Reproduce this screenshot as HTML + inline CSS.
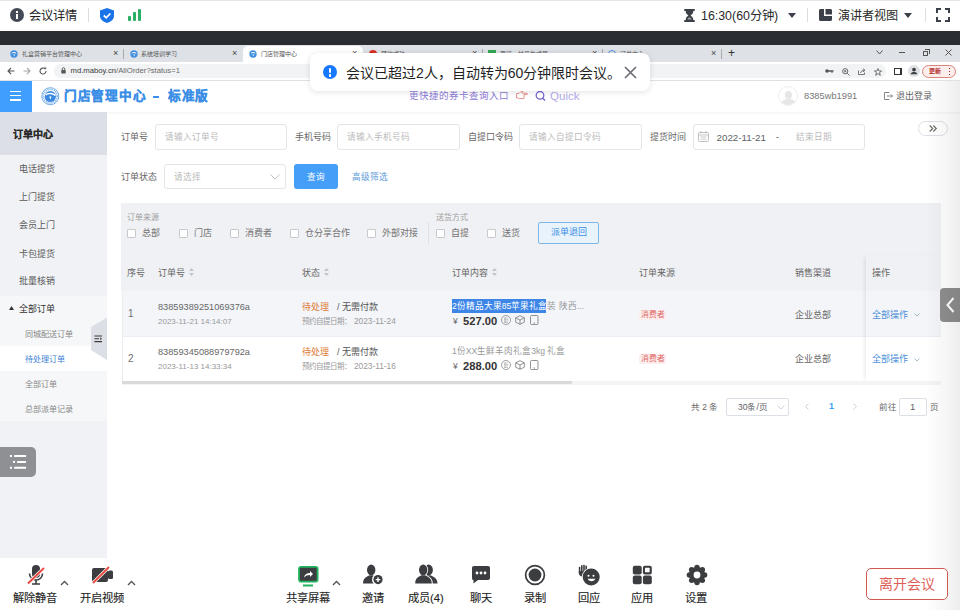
<!DOCTYPE html>
<html lang="zh-CN"><head><meta charset="utf-8">
<style>
*{box-sizing:border-box;margin:0;padding:0}
html,body{width:960px;height:610px;overflow:hidden;background:#fff;font-family:"Liberation Sans",sans-serif;color:#333}
.a{position:absolute;white-space:nowrap}
svg{position:absolute;overflow:visible}
</style></head><body>
<!-- ============ TOP MEETING BAR ============ -->
<div class="a" style="left:0;top:0;width:960px;height:31px;background:#fff;border-top:1px solid #e6e6e6"></div>
<div class="a" style="left:10px;top:8px;width:14px;height:14px;border-radius:50%;background:#444a55"></div>
<div class="a" style="left:16px;top:11px;width:2px;height:2px;background:#fff"></div>
<div class="a" style="left:16px;top:14px;width:2px;height:5px;background:#fff"></div>
<div class="a" style="left:29px;top:7px;font-size:12.3px;line-height:18px;color:#1f1f1f">会议详情</div>
<div class="a" style="left:88px;top:8px;width:1px;height:14px;background:#ddd"></div>
<svg style="left:100px;top:8px" width="14" height="15" viewBox="0 0 14 15"><path d="M7 0 L14 2.5 L14 8 C14 11.5 10.5 14 7 15 C3.5 14 0 11.5 0 8 L0 2.5 Z" fill="#1a73e8"/><path d="M3.8 7.5 L6.2 9.8 L10.3 5.5" stroke="#fff" stroke-width="1.8" fill="none"/></svg>
<div class="a" style="left:128px;top:16px;width:3px;height:5px;background:#2bae66;border-radius:1px"></div>
<div class="a" style="left:133px;top:12px;width:3px;height:9px;background:#2bae66;border-radius:1px"></div>
<div class="a" style="left:138px;top:9px;width:3px;height:12px;background:#2bae66;border-radius:1px"></div>

<svg style="left:683.5px;top:8.6px" width="11" height="13" viewBox="0 0 11 13"><path d="M1 0H10A1 1 0 0 1 10 2H9.2V3C9.2 4.8 7 5.8 6.6 6.5C7 7.2 9.2 8.2 9.2 10V11H10A1 1 0 0 1 10 13H1A1 1 0 0 1 1 11H1.8V10C1.8 8.2 4 7.2 4.4 6.5C4 5.8 1.8 4.8 1.8 3V2H1A1 1 0 0 1 1 0Z" fill="#3c4048"/><path d="M3.5 10.5C3.5 9.3 5 8.5 5.5 8.3C6 8.5 7.5 9.3 7.5 10.5Z" fill="#fff" opacity="0.5"/></svg>
<div class="a" style="left:701px;top:6.6px;font-size:12.4px;line-height:18px;color:#2a2a2a">16:30(60分钟)</div>
<svg style="left:788px;top:13px" width="8" height="5" viewBox="0 0 8 5"><path d="M0 0H8L4 5Z" fill="#3c4048"/></svg>
<div class="a" style="left:807px;top:8px;width:1px;height:14px;background:#ddd"></div>
<svg style="left:819px;top:9px" width="13" height="12" viewBox="0 0 13 12"><path d="M1.5 0H5V7H13V10.5C13 11.3 12.3 12 11.5 12H1.5C0.7 12 0 11.3 0 10.5V1.5C0 0.7 0.7 0 1.5 0ZM6.5 0H11.5C12.3 0 13 0.7 13 1.5V5.5H6.5Z" fill="#3c4048"/></svg>
<div class="a" style="left:838px;top:6.6px;font-size:12.1px;line-height:18px;color:#2a2a2a">演讲者视图</div>
<svg style="left:904px;top:13px" width="8" height="5" viewBox="0 0 8 5"><path d="M0 0H8L4 5Z" fill="#3c4048"/></svg>
<div class="a" style="left:925px;top:8px;width:1px;height:14px;background:#ddd"></div>
<svg style="left:936px;top:8px" width="14" height="14" viewBox="0 0 14 14"><path d="M1 5V1H5M9 1H13V5M13 9V13H9M5 13H1V9" stroke="#3c4048" stroke-width="2" fill="none"/></svg>

<!-- dark band -->
<div class="a" style="left:0;top:31px;width:960px;height:14px;background:#2a2d31"></div>

<!-- ============ BROWSER CHROME ============ -->
<div class="a" style="left:0;top:45px;width:960px;height:17px;background:#dee1e6"></div>
<!-- tabs -->
<svg style="left:10px;top:49.5px" width="8" height="8" viewBox="0 0 8 8"><circle cx="4" cy="4" r="3.7" fill="#3f8fe0"/><path d="M1.8 3.6C2.6 2.2 5 2 6.2 3.4" stroke="#fff" stroke-width="1" fill="none"/><path d="M3.2 4.6H5.2L4.2 6.2Z" fill="#fff"/></svg>
<div class="a" style="left:22px;top:48.5px;font-size:6px;line-height:11px;color:#555">礼盒营销平台管理中心</div>
<div class="a" style="left:113px;top:47px;font-size:9px;line-height:12px;color:#444">×</div>
<div class="a" style="left:123px;top:49px;width:1px;height:10px;background:#aaa"></div>
<svg style="left:130px;top:49.5px" width="8" height="8" viewBox="0 0 8 8"><circle cx="4" cy="4" r="3.7" fill="#3f8fe0"/><path d="M1.8 3.6C2.6 2.2 5 2 6.2 3.4" stroke="#fff" stroke-width="1" fill="none"/><path d="M3.2 4.6H5.2L4.2 6.2Z" fill="#fff"/></svg>
<div class="a" style="left:141px;top:48.5px;font-size:6px;line-height:11px;color:#555">系统培训学习</div>
<div class="a" style="left:232px;top:47px;font-size:9px;line-height:12px;color:#444">×</div>
<div class="a" style="left:243px;top:46px;width:120px;height:16px;background:#fff;border-radius:5px 5px 0 0"></div>
<svg style="left:249px;top:49.5px" width="8" height="8" viewBox="0 0 8 8"><circle cx="4" cy="4" r="3.7" fill="#3f8fe0"/><path d="M1.8 3.6C2.6 2.2 5 2 6.2 3.4" stroke="#fff" stroke-width="1" fill="none"/><path d="M3.2 4.6H5.2L4.2 6.2Z" fill="#fff"/></svg>
<div class="a" style="left:261px;top:48.5px;font-size:6px;line-height:11px;color:#555">门店管理中心</div>
<div class="a" style="left:352px;top:47px;font-size:9px;line-height:12px;color:#444">×</div>
<div class="a" style="left:369px;top:50px;width:8px;height:8px;border-radius:50%;background:#d93025"></div>
<div class="a" style="left:381px;top:48.5px;font-size:6px;line-height:11px;color:#555">预约成功</div>
<div class="a" style="left:472px;top:47px;font-size:9px;line-height:12px;color:#444">×</div>
<div class="a" style="left:482px;top:49px;width:1px;height:10px;background:#aaa"></div>
<div class="a" style="left:488px;top:50px;width:8px;height:8px;background:#34a853"></div>
<div class="a" style="left:500px;top:48.5px;font-size:6px;line-height:11px;color:#555">贾红一林平生成器</div>
<div class="a" style="left:592px;top:47px;font-size:9px;line-height:12px;color:#444">×</div>
<div class="a" style="left:602px;top:49px;width:1px;height:10px;background:#aaa"></div>
<div class="a" style="left:608px;top:50px;width:8px;height:8px;border-radius:50%;border:1.3px solid #4a90e2"></div>
<div class="a" style="left:620px;top:48.5px;font-size:6px;line-height:11px;color:#555">订单中心</div>
<div class="a" style="left:711px;top:47px;font-size:9px;line-height:12px;color:#444">×</div>
<div class="a" style="left:721px;top:49px;width:1px;height:10px;background:#aaa"></div>
<div class="a" style="left:728px;top:45px;font-size:12px;line-height:16px;color:#333">+</div>
<svg style="left:876px;top:50px" width="7" height="5" viewBox="0 0 7 5"><path d="M0.5 0.5L3.5 4L6.5 0.5" stroke="#555" stroke-width="1" fill="none"/></svg>
<div class="a" style="left:899px;top:52px;width:6px;height:1px;background:#555"></div>
<div class="a" style="left:923px;top:50.5px;width:5px;height:5px;border:1px solid #555;border-radius:0.5px"></div><div class="a" style="left:924.5px;top:49px;width:4.5px;height:1px;background:#555"></div><div class="a" style="left:928.5px;top:49px;width:1px;height:5px;background:#555"></div>
<svg style="left:945px;top:49px" width="7" height="7" viewBox="0 0 7 7"><path d="M0.5 0.5L6.5 6.5M6.5 0.5L0.5 6.5" stroke="#555" stroke-width="1"/></svg>

<!-- toolbar -->
<div class="a" style="left:0;top:62px;width:960px;height:19px;background:#fff;border-bottom:1px solid #e3e3e3"></div>
<svg style="left:7px;top:67px" width="8" height="8" viewBox="0 0 8 8"><path d="M7.5 4H1M4 1L1 4L4 7" stroke="#555" stroke-width="1.1" fill="none"/></svg>
<svg style="left:23px;top:67px" width="8" height="8" viewBox="0 0 8 8"><path d="M0.5 4H7M4 1L7 4L4 7" stroke="#aaa" stroke-width="1.1" fill="none"/></svg>
<svg style="left:39px;top:67px" width="8" height="8" viewBox="0 0 8 8"><path d="M7 4A3 3 0 1 1 6 1.8" stroke="#555" stroke-width="1.1" fill="none"/><path d="M5 0.5H7.2V2.7Z" fill="#555"/></svg>
<div class="a" style="left:54px;top:64px;width:832px;height:14px;background:#f1f3f4;border-radius:7px"></div>
<svg style="left:61px;top:67px" width="5" height="7" viewBox="0 0 5 7"><path d="M1.2 3V2A1.3 1.3 0 0 1 3.8 2V3" stroke="#555" stroke-width="0.9" fill="none"/><rect x="0.3" y="3" width="4.4" height="3.6" rx="0.5" fill="#555"/></svg>
<div class="a" style="left:70.5px;top:65px;font-size:7.7px;line-height:12px;color:#3a3a3a">md.maboy.cn<span style="color:#6a6a6a">/AllOrder?status=1</span></div>
<svg style="left:825px;top:68px" width="9" height="6" viewBox="0 0 9 6"><circle cx="2" cy="3" r="1.8" fill="#555"/><path d="M3 2.2H8.5V3.8H7.5V5H6.5V3.8H3Z" fill="#555"/></svg>
<svg style="left:842px;top:67.5px" width="8" height="8" viewBox="0 0 8 8"><circle cx="3.2" cy="3.2" r="2.6" fill="none" stroke="#555" stroke-width="0.9"/><path d="M5.2 5.2L7.6 7.6M2 3.2H4.4M3.2 2V4.4" stroke="#555" stroke-width="0.8"/></svg>
<svg style="left:858px;top:67.5px" width="8" height="7" viewBox="0 0 8 7"><path d="M0.5 2.5V6.5H6.5V4.5M2.5 5C3 3 4.5 2.3 6.5 2.3M5 0.7L7 2.3L5 3.9" fill="none" stroke="#555" stroke-width="0.8"/></svg>
<svg style="left:873.5px;top:67.5px" width="8" height="8" viewBox="0 0 8 8"><path d="M4 0.6L5 3H7.6L5.5 4.6L6.3 7.3L4 5.7L1.7 7.3L2.5 4.6L0.4 3H3Z" fill="none" stroke="#555" stroke-width="0.8"/></svg>
<div class="a" style="left:922px;top:64.5px;width:34px;height:13.5px;border:1px solid #d9857a;border-radius:7px;background:#fbeeec"></div>
<div class="a" style="left:929px;top:66px;font-size:6px;line-height:11px;color:#b3261e;-webkit-text-stroke:0.2px #b3261e">更新</div>
<div class="a" style="left:948.5px;top:67.5px;width:1.4px;height:1.4px;background:#b3261e"></div>
<div class="a" style="left:948.5px;top:70.5px;width:1.4px;height:1.4px;background:#b3261e"></div>
<div class="a" style="left:948.5px;top:73.5px;width:1.4px;height:1.4px;background:#b3261e"></div>
<svg style="left:907.5px;top:65px" width="12" height="12" viewBox="0 0 12 12"><circle cx="6" cy="6" r="6" fill="#dfe1e5"/><circle cx="6" cy="4.6" r="1.9" fill="#3c4043"/><path d="M2.6 9.2C3.1 7.6 4.4 7 6 7S8.9 7.6 9.4 9.2Z" fill="#3c4043"/></svg>
<div class="a" style="left:893.5px;top:68px;width:8px;height:7px;border:1.2px solid #333;border-right-width:2.6px"></div>

<!-- ============ PAGE HEADER ============ -->
<div class="a" style="left:0;top:81px;width:960px;height:31px;background:#fff;box-shadow:0 1px 3px rgba(0,0,0,0.06)"></div>
<div class="a" style="left:0;top:81px;width:32px;height:31px;background:#409eff"></div>
<div class="a" style="left:10px;top:90.8px;width:11px;height:1.6px;background:#fff"></div>
<div class="a" style="left:10px;top:94.9px;width:11px;height:1.6px;background:#fff"></div>
<div class="a" style="left:10px;top:99px;width:11px;height:1.6px;background:#fff"></div>
<svg style="left:41px;top:87px" width="19" height="19" viewBox="0 0 19 19"><circle cx="9.3" cy="9.2" r="8.5" fill="none" stroke="#5b9fe6" stroke-width="0.9"/><circle cx="9.3" cy="9.2" r="6.9" fill="none" stroke="#7fb4ec" stroke-width="1.6" stroke-dasharray="1.2 0.9"/><circle cx="9.3" cy="9.5" r="5.6" fill="#3a88e0"/><path d="M4.6 8.2C6 6 12.5 5.8 14.2 8.6" stroke="#fff" stroke-width="1.5" fill="none"/><path d="M8.2 9.5L10.6 9.5L9.4 12.5Z" fill="#fff"/></svg>
<div class="a" style="left:64px;top:87px;font-size:12.6px;letter-spacing:0.73px;line-height:18px;font-weight:bold;color:#3a8ee6;-webkit-text-stroke:0.3px #3a8ee6">门店管理中心</div>
<div class="a" style="left:153.3px;top:96.3px;width:6px;height:1.7px;background:#3a8ee6"></div>
<div class="a" style="left:168px;top:87px;font-size:12.6px;letter-spacing:0.73px;line-height:18px;font-weight:bold;color:#3a8ee6;-webkit-text-stroke:0.3px #3a8ee6">标准版</div>
<div class="a" style="left:409px;top:89px;font-size:9.5px;line-height:13px;color:#8c7ad6">更快捷的券卡查询入口</div>
<svg style="left:516px;top:91px" width="12" height="8" viewBox="0 0 12 8"><path d="M0.5 2.5H3L5 0.5H6.5L6 2.2H11C11.6 2.2 11.6 3.6 11 3.6H8V7.5H3.2L2.8 7H0.5Z" fill="none" stroke="#e58a84" stroke-width="0.9"/></svg>
<svg style="left:535px;top:91px" width="11" height="10" viewBox="0 0 11 10"><circle cx="5" cy="4.3" r="3.8" stroke="#7466d0" stroke-width="1.3" fill="none"/><path d="M7.5 7L10 9.5" stroke="#7466d0" stroke-width="1.4"/></svg>
<div class="a" style="left:550px;top:88px;font-size:11.6px;line-height:15px;color:#b4acea">Quick</div>
<div class="a" style="left:778px;top:86px;width:20px;height:20px;border-radius:50%;background:#fff;border:1px solid #eee;overflow:hidden"><div class="a" style="left:6px;top:4px;width:7px;height:8px;border-radius:50%;background:#e6e6e6"></div><div class="a" style="left:2px;top:12px;width:15px;height:10px;border-radius:50%;background:#e6e6e6"></div></div>
<div class="a" style="left:804px;top:89px;font-size:9.3px;line-height:14px;color:#777">8385wb1991</div>
<svg style="left:884px;top:92px" width="9" height="8" viewBox="0 0 9 8"><path d="M5 1V0.5H0.5V7.5H5V7M3 4H8.5M7 2.5L8.5 4L7 5.5" stroke="#777" stroke-width="0.9" fill="none"/></svg>
<div class="a" style="left:896px;top:89px;font-size:9px;line-height:14px;color:#666">退出登录</div>

<!-- ============ SIDEBAR ============ -->
<div class="a" style="left:0;top:112px;width:107px;height:446px;background:#f0f2f5"></div>
<div class="a" style="left:0;top:112px;width:107px;height:43px;background:#dcdfe5"></div>
<div class="a" style="left:12.8px;top:127.8px;font-size:10px;line-height:14px;font-weight:bold;color:#2a2a2a;-webkit-text-stroke:0.15px #2a2a2a">订单中心</div>
<div class="a" style="left:19px;top:162.8px;font-size:9px;line-height:13px;color:#5a5a5a">电话提货</div>
<div class="a" style="left:19px;top:190.8px;font-size:9px;line-height:13px;color:#5a5a5a">上门提货</div>
<div class="a" style="left:19px;top:218.8px;font-size:9px;line-height:13px;color:#5a5a5a">会员上门</div>
<div class="a" style="left:19px;top:247.8px;font-size:9px;line-height:13px;color:#5a5a5a">卡包提货</div>
<div class="a" style="left:19px;top:274.8px;font-size:9px;line-height:13px;color:#5a5a5a">批量核销</div>
<div class="a" style="left:0;top:296px;width:107px;height:125px;background:#f6f7f9"></div>
<svg style="left:9px;top:306px" width="5" height="4" viewBox="0 0 5 4"><path d="M0 4H5L2.5 0Z" fill="#333"/></svg>
<div class="a" style="left:19px;top:302.7px;font-size:9px;line-height:13px;color:#333">全部订单</div>
<div class="a" style="left:25px;top:328.8px;font-size:8.1px;line-height:12px;color:#888">同城配送订单</div>
<div class="a" style="left:0;top:346px;width:107px;height:25px;background:#fff"></div>
<div class="a" style="left:25px;top:353.8px;font-size:8.1px;line-height:12px;color:#3d7fd6">待处理订单</div>
<div class="a" style="left:25px;top:378.8px;font-size:8.1px;line-height:12px;color:#888">全部订单</div>
<div class="a" style="left:25px;top:403.8px;font-size:8.1px;line-height:12px;color:#888">总部派单记录</div>
<svg style="left:91px;top:317px" width="16" height="43" viewBox="0 0 16 43"><path d="M16 0.5V43L0 33V10Z" fill="#dcdfe6"/><path d="M3.5 19H11M3.5 21.8H8M3.5 24.6H11" stroke="#3a3a3a" stroke-width="1.1"/><path d="M9.3 20.3L11 21.8L9.3 23.3Z" fill="#3a3a3a"/></svg>
<div class="a" style="left:0;top:447px;width:36px;height:30px;background:#8e9093;border-radius:0 5px 5px 0"></div>
<svg style="left:0px;top:450px" width="30" height="22" viewBox="0 0 30 22"><g fill="#fff"><rect x="10" y="5" width="2" height="2"/><rect x="14.1" y="5" width="12" height="2" rx="0.6"/><rect x="13" y="10.9" width="2" height="2"/><rect x="17" y="10.9" width="9.1" height="2" rx="0.6"/><rect x="10" y="16.8" width="2" height="2"/><rect x="14.1" y="16.8" width="12" height="2" rx="0.6"/></g></svg>

<!-- ============ FORM ============ -->
<div class="a" style="left:121px;top:131px;font-size:9px;line-height:13px;color:#666">订单号</div>
<div class="a" style="left:155px;top:124px;width:132px;height:26px;border:1px solid #e2e5ea;border-radius:3px;background:#fff"></div>
<div class="a" style="left:165px;top:131px;font-size:8.6px;line-height:13px;color:#bbb">请输入订单号</div>
<div class="a" style="left:295px;top:131px;font-size:9px;line-height:13px;color:#666">手机号码</div>
<div class="a" style="left:337px;top:124px;width:123px;height:26px;border:1px solid #e2e5ea;border-radius:3px;background:#fff"></div>
<div class="a" style="left:347px;top:131px;font-size:8.6px;line-height:13px;color:#bbb">请输入手机号码</div>
<div class="a" style="left:468px;top:131px;font-size:9px;line-height:13px;color:#666">自提口令码</div>
<div class="a" style="left:519px;top:124px;width:123px;height:26px;border:1px solid #e2e5ea;border-radius:3px;background:#fff"></div>
<div class="a" style="left:529px;top:131px;font-size:8.6px;line-height:13px;color:#bbb">请输入自提口令码</div>
<div class="a" style="left:650px;top:131px;font-size:9px;line-height:13px;color:#666">提货时间</div>
<div class="a" style="left:693px;top:124px;width:172px;height:26px;border:1px solid #e2e5ea;border-radius:3px;background:#fff"></div>
<svg style="left:698px;top:131px" width="11" height="11" viewBox="0 0 11 11"><rect x="0.5" y="1.5" width="10" height="9" rx="1" fill="none" stroke="#b0b0b0" stroke-width="0.8"/><path d="M0.5 4H10.5M3 0V2.5M8 0V2.5M2.5 6H8.5M2.5 8.2H8.5" stroke="#b0b0b0" stroke-width="0.7"/></svg>
<div class="a" style="left:716.5px;top:131px;font-size:9.8px;line-height:13px;color:#606266">2022-11-21</div>
<div class="a" style="left:776px;top:131px;font-size:9px;line-height:13px;color:#555">-</div>
<div class="a" style="left:796px;top:131px;font-size:8.6px;line-height:13px;color:#bbb">结束日期</div>
<div class="a" style="left:918px;top:121px;width:30px;height:15px;border:1px solid #dcdfe6;border-radius:8px;background:#fff"></div>
<svg style="left:929px;top:125px" width="9" height="7" viewBox="0 0 9 7"><path d="M0.7 0.5L3.7 3.5L0.7 6.5M4.3 0.5L7.3 3.5L4.3 6.5" stroke="#666" stroke-width="1.1" fill="none"/></svg>

<div class="a" style="left:121px;top:171px;font-size:9px;line-height:13px;color:#666">订单状态</div>
<div class="a" style="left:164px;top:164px;width:122px;height:25px;border:1px solid #e2e5ea;border-radius:3px;background:#fff"></div>
<div class="a" style="left:174px;top:171px;font-size:8.6px;line-height:13px;color:#bbb">请选择</div>
<svg style="left:270px;top:174px" width="10" height="6" viewBox="0 0 10 6"><path d="M0.5 0.5L5 5L9.5 0.5" stroke="#bbb" stroke-width="0.9" fill="none"/></svg>
<div class="a" style="left:294px;top:164px;width:44px;height:25px;border-radius:3px;background:#459ef7"></div>
<div class="a" style="left:307px;top:171px;font-size:8.6px;line-height:13px;color:#fff">查询</div>
<div class="a" style="left:352px;top:171px;font-size:8.6px;line-height:13px;color:#5a9ad6">高级筛选</div>

<!-- filter panel -->
<div class="a" style="left:121px;top:203px;width:820px;height:88px;background:#f0f1f4"></div>
<div class="a" style="left:127px;top:211.7px;font-size:8px;line-height:11px;color:#a0a0a0">订单来源</div>
<div class="a" style="left:127px;top:229px;width:9px;height:9px;border:1px solid #c8c9cc;border-radius:1px;background:#fff"></div>
<div class="a" style="left:142px;top:226.9px;font-size:9px;line-height:13px;color:#707070">总部</div>
<div class="a" style="left:179px;top:229px;width:9px;height:9px;border:1px solid #c8c9cc;border-radius:1px;background:#fff"></div>
<div class="a" style="left:194px;top:226.9px;font-size:9px;line-height:13px;color:#707070">门店</div>
<div class="a" style="left:230px;top:229px;width:9px;height:9px;border:1px solid #c8c9cc;border-radius:1px;background:#fff"></div>
<div class="a" style="left:245px;top:226.9px;font-size:9px;line-height:13px;color:#707070">消费者</div>
<div class="a" style="left:290px;top:229px;width:9px;height:9px;border:1px solid #c8c9cc;border-radius:1px;background:#fff"></div>
<div class="a" style="left:305px;top:226.9px;font-size:9px;line-height:13px;color:#707070">仓分享合作</div>
<div class="a" style="left:367px;top:229px;width:9px;height:9px;border:1px solid #c8c9cc;border-radius:1px;background:#fff"></div>
<div class="a" style="left:382px;top:226.9px;font-size:9px;line-height:13px;color:#707070">外部对接</div>
<div class="a" style="left:428px;top:222px;width:1px;height:22px;background:#e0e0e0"></div>
<div class="a" style="left:436px;top:211.7px;font-size:8px;line-height:11px;color:#a0a0a0">送货方式</div>
<div class="a" style="left:436px;top:229px;width:9px;height:9px;border:1px solid #c8c9cc;border-radius:1px;background:#fff"></div>
<div class="a" style="left:451px;top:226.9px;font-size:9px;line-height:13px;color:#707070">自提</div>
<div class="a" style="left:487px;top:229px;width:9px;height:9px;border:1px solid #c8c9cc;border-radius:1px;background:#fff"></div>
<div class="a" style="left:502px;top:226.9px;font-size:9px;line-height:13px;color:#707070">送货</div>
<div class="a" style="left:538px;top:222px;width:61px;height:22px;border:1px solid #7fb8e8;border-radius:2px;background:#e8f3fc"></div>
<div class="a" style="left:551px;top:226px;font-size:9px;line-height:13px;color:#3a8ee6">派单退回</div>

<!-- ============ TABLE ============ -->
<div class="a" style="left:122px;top:291px;width:819px;height:90px;background:#fff;border-left:1px solid #ebedf0"></div>
<div class="a" style="left:122px;top:291px;width:819px;height:46px;background:#f3f5f9;border-left:1px solid #ebedf0"></div>
<div class="a" style="left:122px;top:336px;width:819px;height:1px;background:#ebeef5"></div>
<div class="a" style="left:127px;top:266.7px;font-size:9px;line-height:13px;color:#666">序号</div>
<div class="a" style="left:158px;top:266.7px;font-size:9px;line-height:13px;color:#666">订单号</div>
<svg style="left:189px;top:268px" width="5" height="8" viewBox="0 0 5 8"><path d="M0 3H5L2.5 0ZM0 5H5L2.5 8Z" fill="#c0c4cc"/></svg>
<div class="a" style="left:302px;top:266.7px;font-size:9px;line-height:13px;color:#666">状态</div>
<svg style="left:324px;top:268px" width="5" height="8" viewBox="0 0 5 8"><path d="M0 3H5L2.5 0ZM0 5H5L2.5 8Z" fill="#c0c4cc"/></svg>
<div class="a" style="left:452px;top:266.7px;font-size:9px;line-height:13px;color:#666">订单内容</div>
<svg style="left:492px;top:268px" width="5" height="8" viewBox="0 0 5 8"><path d="M0 3H5L2.5 0ZM0 5H5L2.5 8Z" fill="#c0c4cc"/></svg>
<div class="a" style="left:639px;top:266.7px;font-size:9px;line-height:13px;color:#666">订单来源</div>
<div class="a" style="left:795px;top:266.7px;font-size:9px;line-height:13px;color:#666">销售渠道</div>
<div class="a" style="left:866px;top:255px;width:75px;height:126px;box-shadow:-3px 0 4px -2px rgba(0,0,0,0.10)"></div>
<div class="a" style="left:872px;top:266.7px;font-size:9px;line-height:13px;color:#666">操作</div>

<div class="a" style="left:128px;top:307px;font-size:10px;line-height:13px;color:#707070">1</div>
<div class="a" style="left:158px;top:300.9px;font-size:9.2px;line-height:13px;color:#666">83859389251069376a</div>
<div class="a" style="left:158px;top:315.9px;font-size:8px;line-height:12px;color:#999">2023-11-21 14:14:07</div>
<div class="a" style="left:302px;top:300.9px;font-size:9px;line-height:13px;color:#e6a23c"><span style="color:#e07b39">待处理</span> <span style="color:#555;margin-left:3px">&nbsp;/ 无需付款</span></div>
<div class="a" style="left:302px;top:315.4px;font-size:7.5px;line-height:12px;color:#999">预约自提日期：<span style="font-size:8.3px;margin-left:3px">2023-11-24</span></div>
<div class="a" style="left:452px;top:300px;font-size:8.6px;line-height:13px;color:#999">2份精品大果85苹果礼盒装 陕西...</div>
<div class="a" style="left:452px;top:299px;width:94px;height:14px;background:#3d86e8;overflow:hidden"><div class="a" style="left:0;top:1px;font-size:8.6px;line-height:13px;color:#fff">2份精品大果85苹果礼盒装 陕西...</div></div>
<div class="a" style="left:453px;top:314px;font-size:8.5px;line-height:14px;color:#666">¥</div>
<div class="a" style="left:463px;top:313px;font-size:11.2px;line-height:16px;font-weight:bold;color:#333">527.00</div>
<svg style="left:501px;top:315px" width="38" height="10" viewBox="0 0 38 10"><circle cx="5" cy="5" r="4.5" fill="none" stroke="#888" stroke-width="0.8"/><path d="M3 3H7M3 4.5H7M3 6H7M3 7.5H7M4 2.2V8" stroke="#999" stroke-width="0.5"/><path d="M19 0.7L23.3 2.8V7.2L19 9.3L14.7 7.2V2.8Z M14.7 2.8L19 5L23.3 2.8M19 5V9.3" fill="none" stroke="#777" stroke-width="0.8"/><rect x="29.5" y="0.5" width="7.5" height="9" rx="1" fill="none" stroke="#777" stroke-width="0.8"/><path d="M32.5 8H34" stroke="#777" stroke-width="0.8"/></svg>
<div class="a" style="left:639px;top:310px;width:27px;height:9.5px;background:#fdeeee;border-radius:2px"></div>
<div class="a" style="left:640.5px;top:309.5px;font-size:7.9px;line-height:10px;color:#e06666">消费者</div>
<div class="a" style="left:795px;top:308.8px;font-size:9px;line-height:13px;color:#666">企业总部</div>
<div class="a" style="left:872px;top:308.8px;font-size:9px;line-height:13px;color:#4a8fd8">全部操作</div>
<svg style="left:914px;top:313px" width="6" height="4" viewBox="0 0 6 4"><path d="M0.5 0.5L3 3L5.5 0.5" stroke="#8ab" stroke-width="0.8" fill="none"/></svg>

<div class="a" style="left:128px;top:352px;font-size:10px;line-height:13px;color:#707070">2</div>
<div class="a" style="left:158px;top:345.9px;font-size:9.2px;line-height:13px;color:#666">83859345088979792a</div>
<div class="a" style="left:158px;top:360.9px;font-size:8px;line-height:12px;color:#999">2023-11-13 14:33:34</div>
<div class="a" style="left:302px;top:345.9px;font-size:9px;line-height:13px;color:#e6a23c"><span style="color:#e07b39">待处理</span> <span style="color:#555;margin-left:3px">&nbsp;/ 无需付款</span></div>
<div class="a" style="left:302px;top:360.4px;font-size:7.5px;line-height:12px;color:#999">预约自提日期：<span style="font-size:8.3px;margin-left:3px">2023-11-16</span></div>
<div class="a" style="left:452px;top:345px;font-size:8.6px;line-height:13px;color:#999">1份XX生鲜羊肉礼盒3kg 礼盒</div>
<div class="a" style="left:453px;top:359px;font-size:8.5px;line-height:14px;color:#666">¥</div>
<div class="a" style="left:463px;top:358px;font-size:11.2px;line-height:16px;font-weight:bold;color:#333">288.00</div>
<svg style="left:501px;top:360px" width="38" height="10" viewBox="0 0 38 10"><circle cx="5" cy="5" r="4.5" fill="none" stroke="#888" stroke-width="0.8"/><path d="M3 3H7M3 4.5H7M3 6H7M3 7.5H7M4 2.2V8" stroke="#999" stroke-width="0.5"/><path d="M19 0.7L23.3 2.8V7.2L19 9.3L14.7 7.2V2.8Z M14.7 2.8L19 5L23.3 2.8M19 5V9.3" fill="none" stroke="#777" stroke-width="0.8"/><rect x="29.5" y="0.5" width="7.5" height="9" rx="1" fill="none" stroke="#777" stroke-width="0.8"/><path d="M32.5 8H34" stroke="#777" stroke-width="0.8"/></svg>
<div class="a" style="left:639px;top:354.3px;width:27px;height:9.5px;background:#fdeeee;border-radius:2px"></div>
<div class="a" style="left:640.5px;top:353.8px;font-size:7.9px;line-height:10px;color:#e06666">消费者</div>
<div class="a" style="left:795px;top:353.2px;font-size:9px;line-height:13px;color:#666">企业总部</div>
<div class="a" style="left:872px;top:353.2px;font-size:9px;line-height:13px;color:#4a8fd8">全部操作</div>
<svg style="left:914px;top:357.5px" width="6" height="4" viewBox="0 0 6 4"><path d="M0.5 0.5L3 3L5.5 0.5" stroke="#8ab" stroke-width="0.8" fill="none"/></svg>
<div class="a" style="left:122px;top:381px;width:819px;height:4px;background:#f4f4f6"></div>
<div class="a" style="left:122px;top:381px;width:450px;height:3px;background:#dadadb"></div>

<!-- pagination -->
<div class="a" style="left:691px;top:401px;font-size:8.5px;line-height:12px;color:#666">共 2 条</div>
<div class="a" style="left:726px;top:398px;width:63px;height:18px;border:1px solid #dcdfe6;border-radius:2px;background:#fff"></div>
<div class="a" style="left:738px;top:401px;font-size:8.5px;line-height:12px;color:#606266">30条/页</div>
<svg style="left:777px;top:405px" width="8" height="5" viewBox="0 0 8 5"><path d="M0.5 0.5L4 4L7.5 0.5" stroke="#c0c4cc" stroke-width="0.8" fill="none"/></svg>
<svg style="left:805px;top:403px" width="4" height="7" viewBox="0 0 4 7"><path d="M3.5 0.5L0.5 3.5L3.5 6.5" stroke="#c0c4cc" stroke-width="0.8" fill="none"/></svg>
<div class="a" style="left:829px;top:400px;font-size:9px;line-height:13px;color:#409eff;font-weight:bold">1</div>
<svg style="left:853px;top:403px" width="4" height="7" viewBox="0 0 4 7"><path d="M0.5 0.5L3.5 3.5L0.5 6.5" stroke="#c0c4cc" stroke-width="0.8" fill="none"/></svg>
<div class="a" style="left:879px;top:401px;font-size:8.5px;line-height:12px;color:#666">前往</div>
<div class="a" style="left:899px;top:398px;width:28px;height:18px;border:1px solid #dcdfe6;border-radius:2px;background:#fff"></div>
<div class="a" style="left:910px;top:400px;font-size:9.5px;line-height:13px;color:#606266">1</div>
<div class="a" style="left:930px;top:401px;font-size:8.5px;line-height:12px;color:#666">页</div>

<!-- right edge shade + side tab -->

<div class="a" style="left:940px;top:288px;width:22px;height:34px;background:#8e8e8e;border-radius:4px 0 0 4px"></div>
<svg style="left:946px;top:297px" width="9" height="16" viewBox="0 0 9 16"><path d="M7.5 1L1.5 8L7.5 15" stroke="#fff" stroke-width="2" fill="none"/></svg>

<!-- ============ TOAST ============ -->
<div class="a" style="left:310px;top:53px;width:340px;height:38px;background:#fff;border-radius:8px;box-shadow:0 1px 6px rgba(0,0,0,0.12)"></div>
<div class="a" style="left:322.6px;top:64.6px;width:14.6px;height:14.6px;border-radius:50%;background:#1677ff"></div>
<div class="a" style="left:328.8px;top:67.6px;width:2.3px;height:5.6px;border-radius:1px;background:#fff"></div>
<div class="a" style="left:328.8px;top:74.4px;width:2.3px;height:2.2px;border-radius:0.5px;background:#fff"></div>
<div class="a" style="left:346px;top:64px;font-size:14px;line-height:19px;color:#1f1f1f">会议已超过2人，自动转为60分钟限时会议。</div>
<svg style="left:624px;top:66px" width="13" height="13" viewBox="0 0 13 13"><path d="M1 1L12 12M12 1L1 12" stroke="#6b6e75" stroke-width="1.7"/></svg>

<!-- ============ MEETING TOOLBAR ============ -->
<div class="a" style="left:0;top:558px;width:960px;height:52px;background:#fff"></div>
<!-- mic -->
<svg style="left:26px;top:564px" width="20" height="22" viewBox="0 0 20 22"><rect x="6" y="1" width="8" height="13" rx="4" fill="#3c3d40"/><path d="M3.5 9.5C3.5 13.5 6.5 16 10 16C13.5 16 16.5 13.5 16.5 9.5" stroke="#3c3d40" stroke-width="1.6" fill="none"/><path d="M10 16V19.5M6 20H14" stroke="#3c3d40" stroke-width="1.6"/><path d="M2 19.5L18 4" stroke="#fff" stroke-width="3.2"/><path d="M2 19.5L18 4" stroke="#e8453c" stroke-width="1.8"/></svg>
<svg style="left:60px;top:580px" width="9" height="6" viewBox="0 0 9 6"><path d="M1 5L4.5 1.5L8 5" stroke="#555" stroke-width="1.4" fill="none"/></svg>
<div class="a" style="left:13px;top:589.8px;font-size:11.3px;line-height:16px;color:#1f1f1f;-webkit-text-stroke:0.12px #1f1f1f">解除静音</div>
<!-- camera -->
<svg style="left:91px;top:566px" width="24" height="18" viewBox="0 0 24 18"><rect x="1" y="2" width="16" height="14" rx="2" fill="#3c3d40"/><rect x="17" y="4.5" width="5" height="8.5" rx="1.5" fill="#3c3d40"/><path d="M2 17L18 1" stroke="#fff" stroke-width="3.2"/><path d="M2 17L18 1" stroke="#e8453c" stroke-width="1.8"/></svg>
<svg style="left:127px;top:580px" width="9" height="6" viewBox="0 0 9 6"><path d="M1 5L4.5 1.5L8 5" stroke="#555" stroke-width="1.4" fill="none"/></svg>
<div class="a" style="left:80px;top:589.8px;font-size:11.3px;line-height:16px;color:#1f1f1f;-webkit-text-stroke:0.12px #1f1f1f">开启视频</div>
<!-- share -->
<svg style="left:296px;top:565px" width="24" height="23" viewBox="0 0 24 23"><rect x="3" y="1.8" width="18.6" height="14.8" rx="2" fill="#3c3d40" stroke="#22b35e" stroke-width="1.8"/><path d="M8 12.5C8.5 9.5 10.5 8 14 8V6L17 9L14 12V10C11.5 10 9.5 10.8 8 12.5Z" fill="#fff"/><rect x="7" y="19.5" width="10" height="2" fill="#22b35e"/></svg>
<svg style="left:332px;top:580px" width="9" height="6" viewBox="0 0 9 6"><path d="M1 5L4.5 1.5L8 5" stroke="#555" stroke-width="1.4" fill="none"/></svg>
<div class="a" style="left:286px;top:589.8px;font-size:11.3px;line-height:16px;color:#1f1f1f;-webkit-text-stroke:0.12px #1f1f1f">共享屏幕</div>
<!-- invite -->
<svg style="left:362px;top:564px" width="24" height="21" viewBox="0 0 24 21"><ellipse cx="9.2" cy="5.9" rx="4.2" ry="5.3" fill="#3c3d40"/><path d="M1 19.6C1 16 2.5 13.6 5.5 12.3L7.5 11.3H11L13 12.3C15.5 13.6 16 15 16 16V19.6Z" fill="#3c3d40"/><circle cx="16" cy="15.6" r="6" fill="#fff"/><circle cx="16" cy="15.6" r="4.6" fill="#3c3d40"/><path d="M16 13.3V17.9M13.7 15.6H18.3" stroke="#fff" stroke-width="1.4"/></svg>
<div class="a" style="left:362px;top:589.8px;font-size:11.3px;line-height:16px;color:#1f1f1f;-webkit-text-stroke:0.12px #1f1f1f">邀请</div>
<!-- members -->
<svg style="left:414px;top:564px" width="26" height="21" viewBox="0 0 26 21"><g transform="translate(5.5,0)"><ellipse cx="9.2" cy="5.9" rx="4.2" ry="5.3" fill="#3c3d40"/><path d="M1 19.6C1 16 2.5 13.6 5.5 12.3L7.5 11.3H11L13 12.3C16 13.6 18 16 18 19.6Z" fill="#3c3d40"/></g><g stroke="#fff" stroke-width="1.6"><ellipse cx="9.2" cy="5.9" rx="4.2" ry="5.3" fill="#3c3d40"/><path d="M1 19.6C1 16 2.5 13.6 5.5 12.3L7.5 11.3H11L13 12.3C16 13.6 18 16 18 19.6Z" fill="#3c3d40"/></g><ellipse cx="9.2" cy="5.9" rx="4.2" ry="5.3" fill="#3c3d40"/><path d="M1.2 19.6C1.2 16 2.5 13.6 5.5 12.3L7.5 11.3H11L13 12.3C16 13.6 17.8 16 17.8 19.6Z" fill="#3c3d40"/></svg>
<div class="a" style="left:408px;top:589.8px;font-size:11.3px;line-height:16px;color:#1f1f1f;-webkit-text-stroke:0.12px #1f1f1f">成员(4)</div>
<!-- chat -->
<svg style="left:471px;top:565px" width="20" height="19" viewBox="0 0 20 19"><path d="M3 1H17C18.2 1 19 1.8 19 3V13C19 14.2 18.2 15 17 15H7L2.5 18.5V15.3C1.6 15 1 14.2 1 13V3C1 1.8 1.8 1 3 1Z" fill="#3c3d40"/><circle cx="6" cy="8" r="1.4" fill="#fff"/><circle cx="10" cy="8" r="1.4" fill="#fff"/><circle cx="14" cy="8" r="1.4" fill="#fff"/></svg>
<div class="a" style="left:470px;top:589.8px;font-size:11.3px;line-height:16px;color:#1f1f1f;-webkit-text-stroke:0.12px #1f1f1f">聊天</div>
<!-- record -->
<svg style="left:524px;top:564px" width="22" height="22" viewBox="0 0 22 22"><circle cx="11" cy="11" r="9.4" fill="none" stroke="#3c3d40" stroke-width="1.7"/><circle cx="11" cy="11" r="6.4" fill="#3c3d40"/></svg>
<div class="a" style="left:524px;top:589.8px;font-size:11.3px;line-height:16px;color:#1f1f1f;-webkit-text-stroke:0.12px #1f1f1f">录制</div>
<!-- react -->
<svg style="left:577px;top:563px" width="25" height="24" viewBox="0 0 25 24"><g fill="#3c3d40"><rect x="1.8" y="3.8" width="1.6" height="7" rx="0.8"/><rect x="4" y="1.9" width="1.6" height="8" rx="0.8"/><rect x="6.2" y="1.7" width="1.6" height="8" rx="0.8"/><rect x="8.4" y="2.6" width="1.6" height="8" rx="0.8"/><path d="M1.8 8.3H11V11C11 12.5 9.5 13.4 7.5 13.4H5.5C3.3 13.4 1.8 12 1.8 10Z"/></g><circle cx="14.2" cy="14" r="9.3" fill="#fff"/><circle cx="14.2" cy="14" r="8.5" fill="#3c3d40"/><circle cx="11.5" cy="12.7" r="1.05" fill="#fff"/><circle cx="16.5" cy="12.7" r="1.05" fill="#fff"/><path d="M10.7 15.7C11.6 19 17.4 19 18.3 15.7Z" fill="#fff"/></svg>
<div class="a" style="left:578px;top:589.8px;font-size:11.3px;line-height:16px;color:#1f1f1f;-webkit-text-stroke:0.12px #1f1f1f">回应</div>
<!-- apps -->
<svg style="left:632px;top:565px" width="21" height="20" viewBox="0 0 21 20"><rect x="0.8" y="0.8" width="8.9" height="8.6" rx="2" fill="#3c3d40"/><rect x="10.9" y="0.8" width="8.9" height="8.6" rx="2" fill="#3c3d40"/><rect x="0.8" y="10.6" width="8.9" height="8.6" rx="2" fill="#3c3d40"/><rect x="10.9" y="10.6" width="8.9" height="8.6" rx="2" fill="#3c3d40"/><rect x="13" y="2.8" width="4.6" height="4.4" rx="0.5" fill="#fff"/></svg>
<div class="a" style="left:631px;top:589.8px;font-size:11.3px;line-height:16px;color:#1f1f1f;-webkit-text-stroke:0.12px #1f1f1f">应用</div>
<!-- settings -->
<svg style="left:686px;top:564px" width="22" height="22" viewBox="0 0 22 22"><circle cx="11" cy="11" r="8" fill="#3c3d40"/><circle cx="18.60" cy="11.00" r="2.7" fill="#3c3d40"/><circle cx="16.37" cy="16.37" r="2.7" fill="#3c3d40"/><circle cx="11.00" cy="18.60" r="2.7" fill="#3c3d40"/><circle cx="5.63" cy="16.37" r="2.7" fill="#3c3d40"/><circle cx="3.40" cy="11.00" r="2.7" fill="#3c3d40"/><circle cx="5.63" cy="5.63" r="2.7" fill="#3c3d40"/><circle cx="11.00" cy="3.40" r="2.7" fill="#3c3d40"/><circle cx="16.37" cy="5.63" r="2.7" fill="#3c3d40"/><circle cx="11" cy="11" r="3.4" fill="#fff"/></svg>
<div class="a" style="left:685px;top:589.8px;font-size:11.3px;line-height:16px;color:#1f1f1f;-webkit-text-stroke:0.12px #1f1f1f">设置</div>
<!-- leave -->

<div class="a" style="left:924px;top:81px;width:36px;height:529px;background:linear-gradient(to right,rgba(0,0,0,0),rgba(0,0,0,0.035) 60%,rgba(0,0,0,0.07))"></div>
<div class="a" style="left:866px;top:568px;width:82px;height:32px;border:1px solid #cf5a54;border-radius:5px;background:#fff"></div>
<div class="a" style="left:879px;top:575.2px;font-size:14px;line-height:18px;color:#de5f59">离开会议</div>
</body></html>
